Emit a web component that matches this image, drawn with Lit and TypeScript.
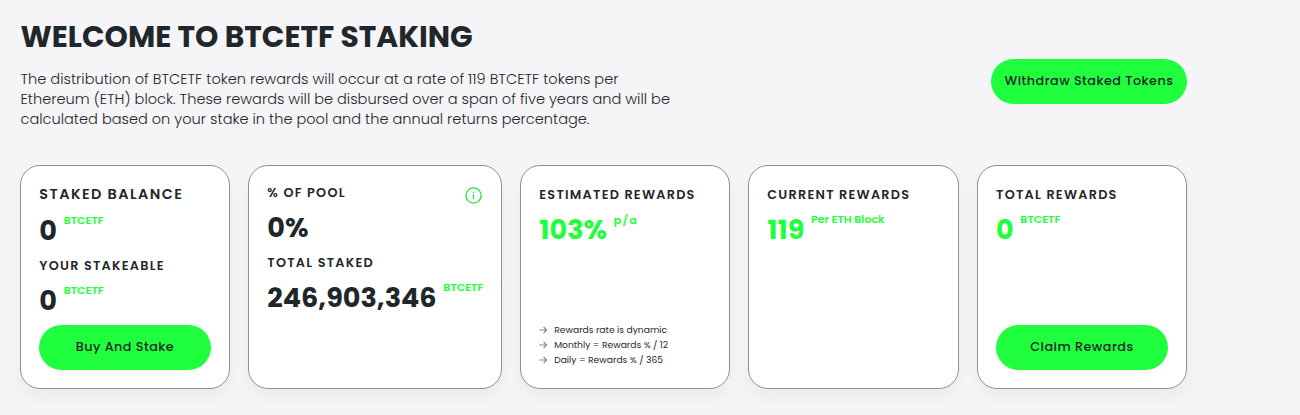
import { LitElement, html, css, svg, nothing } from "lit";
import { customElement, property } from "lit/decorators.js";

@customElement("pill-button")
class PillButton extends LitElement {
  static styles = css`
    :host { display: block; }
    .pill {
      display: block; width: 100%; height: 45px; padding: 0 0 2px; border: 0; border-radius: 23px;
      background: #1fff3d; color: #1f272b; font: inherit; font-size: 12.75px; font-weight: 500;
      letter-spacing: 0.48px; text-align: center; white-space: nowrap; cursor: pointer;
    }
  `;
  render() {
    return html`<button class="pill"><slot></slot></button>`;
  }
}

@customElement("stat-value")
class StatValue extends LitElement {
  static styles = css`
    :host { display: flex; gap: 6.7px; height: 30px; color: #1f272b; }
    :host([accent]) { color: #1fff3d; }
    .num { font-size: 27.1px; font-weight: 700; line-height: 31px; white-space: nowrap; }
    .unit { color: #1fff3d; font-size: 11px; font-weight: 600; line-height: 11px; white-space: nowrap; }
    .spaced { font-size: 11.2px; line-height: 13px; letter-spacing: 1.2px; }
  `;
  @property() value = "";
  @property() unit = "";
  @property({ type: Boolean }) spaced = false;
  @property({ type: Boolean, reflect: true }) accent = false;
  render() {
    return html`<span class="num">${this.value}</span>${this.unit
      ? html`<span class="unit ${this.spaced ? "spaced" : ""}">${this.unit}</span>`
      : nothing}`;
  }
}

const arrow = svg`<path d="M0.3 4H7.8M4.6 1L7.6 4L4.6 7" fill="none" stroke="#85888b" stroke-width="1.1"/>`;

@customElement("app-root")
class AppRoot extends LitElement {
  static styles = css`
    :host {
      display: block; box-sizing: border-box; height: 415px; overflow: hidden; background: #f5f5f8;
      padding: 17px 113px 0 20px; color: #1f272b;
      font-family: Poppins, Inter, sans-serif;
    }
    .top { display: flex; justify-content: space-between; height: 148px; padding-left: 0.5px; }
    h1 { margin: 0 0 12px; font-size: 29.7px; font-weight: 700; line-height: 40px; white-space: nowrap; }
    .intro { width: 660px; font-size: 14.56px; font-weight: 300; line-height: 20px; }
    .withdraw { width: 196px; margin-top: 42px; }
    .cards { display: grid; grid-template-columns: 210px 254px 210px 211px 210px; column-gap: 18px; height: 224px; }
    .card {
      box-sizing: border-box; display: flex; flex-direction: column; padding: 18.5px 18px 18px;
      border: 1px solid #8f9092; border-radius: 20px; background: #fff;
      box-shadow: 0 8px 16px rgba(0, 0, 0, 0.045);
    }
    .card.staked { padding-top: 18px; }
    .card.pool { padding-top: 16.5px; }
    .label { height: 20px; padding-left: 0.3px; font-size: 12.8px; font-weight: 600; line-height: 20px; letter-spacing: 1.25px; white-space: nowrap; }
    .staked-title { font-size: 14.4px; letter-spacing: 1.43px; }
    .value { margin-top: 9.5px; padding-left: 0.3px; }
    .total .label, .total .value { padding-left: 0; }
    .staked .after-title { margin-top: 11px; }
    .staked .after-label { margin-top: 9px; }
    .next { margin-top: 10.5px; }
    .head { display: flex; justify-content: space-between; height: 20px; }
    .info { display: block; margin: 4px 1px 0 0; flex: none; }
    .bottom { margin-top: auto; }
    .notes { margin: auto 0 3px; padding: 0; list-style: none; font-size: 9.17px; }
    .note { display: flex; align-items: center; gap: 6.2px; height: 15px; line-height: 15px; white-space: nowrap; }
  `;
  render() {
    const notes = ["Rewards rate is dynamic", "Monthly = Rewards % / 12", "Daily = Rewards % / 365"];
    return html`
      <header class="top">
        <div>
          <h1>WELCOME TO BTCETF STAKING</h1>
          <div class="intro">
            The distribution of BTCETF token rewards will occur at a rate of 119 BTCETF tokens per<br />
            Ethereum (ETH) block. These rewards will be disbursed over a span of five years and will be<br />
            calculated based on your stake in the pool and the annual returns percentage.
          </div>
        </div>
        <pill-button class="withdraw">Withdraw Staked Tokens</pill-button>
      </header>
      <main class="cards">
        <section class="card staked">
          <div class="label staked-title">STAKED BALANCE</div>
          <stat-value class="value after-title" value="0" unit="BTCETF"></stat-value>
          <div class="label next">YOUR STAKEABLE</div>
          <stat-value class="value after-label" value="0" unit="BTCETF"></stat-value>
          <pill-button class="bottom">Buy And Stake</pill-button>
        </section>
        <section class="card pool">
          <div class="head">
            <div class="label">% OF POOL</div>
            <svg class="info" width="17" height="17" viewBox="0 0 17 17">
              <circle cx="8.5" cy="8.5" r="7.6" fill="none" stroke="#1fe53a" stroke-width="1.3" />
              <path d="M8.5 7.2V12M8.5 4.8V6" stroke="#1fe53a" stroke-width="1.2" />
            </svg>
          </div>
          <stat-value class="value" value="0%"></stat-value>
          <div class="label next">TOTAL STAKED</div>
          <stat-value class="value" value="246,903,346" unit="BTCETF"></stat-value>
        </section>
        <section class="card">
          <div class="label">ESTIMATED REWARDS</div>
          <stat-value class="value" accent spaced value="103%" unit="p/a"></stat-value>
          <ul class="notes">
            ${notes.map((n) => html`<li class="note"><svg width="9" height="8" viewBox="0 0 9 8">${arrow}</svg><span>${n}</span></li>`)}
          </ul>
        </section>
        <section class="card">
          <div class="label">CURRENT REWARDS</div>
          <stat-value class="value" accent value="119" unit="Per ETH Block"></stat-value>
        </section>
        <section class="card total">
          <div class="label">TOTAL REWARDS</div>
          <stat-value class="value" accent value="0" unit="BTCETF"></stat-value>
          <pill-button class="bottom">Claim Rewards</pill-button>
        </section>
      </main>
    `;
  }
}
